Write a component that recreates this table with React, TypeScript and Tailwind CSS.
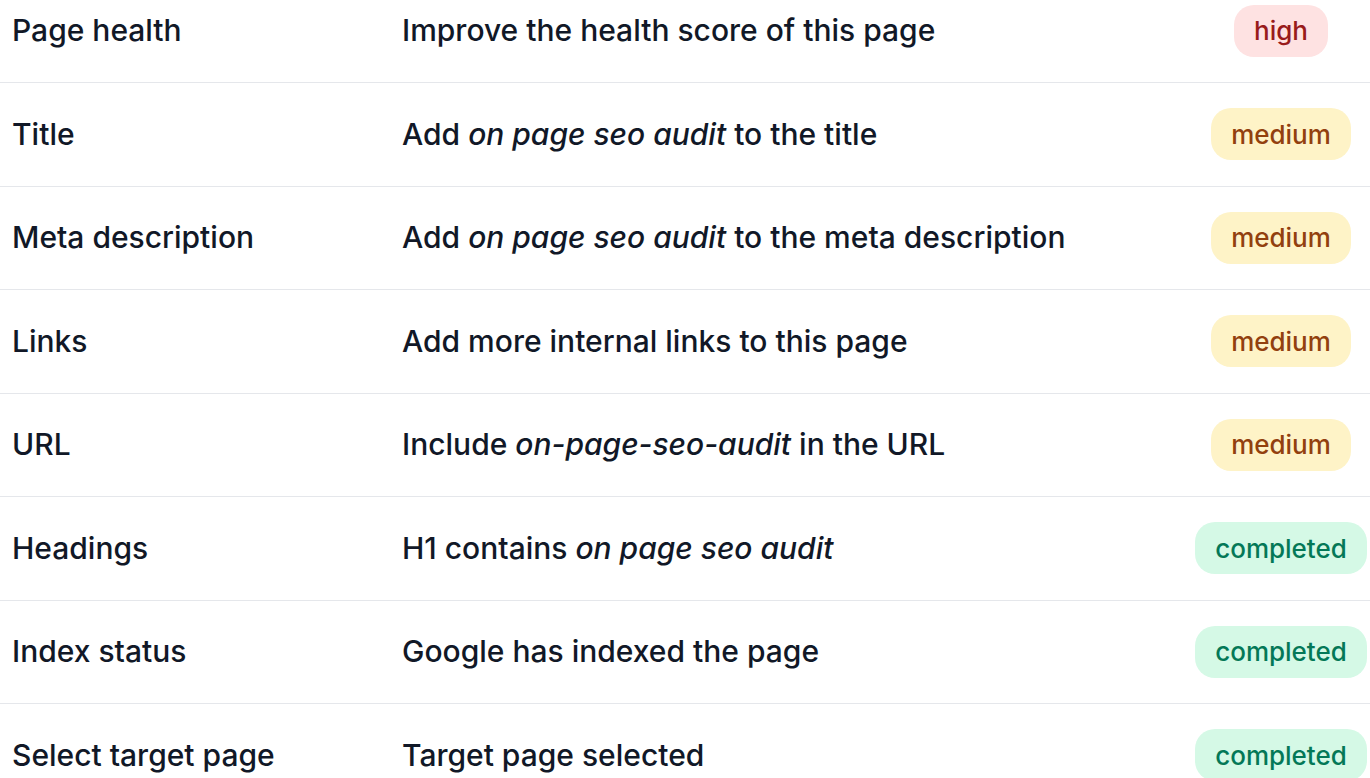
const rows = [
  { label: 'Page health', pre: 'Improve the health score of this page', kw: '', post: '', status: 'high' },
  { label: 'Title', pre: 'Add ', kw: 'on page seo audit', post: ' to the title', status: 'medium' },
  { label: 'Meta description', pre: 'Add ', kw: 'on page seo audit', post: ' to the meta description', status: 'medium' },
  { label: 'Links', pre: 'Add more internal links to this page', kw: '', post: '', status: 'medium' },
  { label: 'URL', pre: 'Include ', kw: 'on-page-seo-audit', post: ' in the URL', status: 'medium' },
  { label: 'Headings', pre: 'H1 contains ', kw: 'on page seo audit', post: '', status: 'completed' },
  { label: 'Index status', pre: 'Google has indexed the page', kw: '', post: '', status: 'completed' },
  { label: 'Select target page', pre: 'Target page selected', kw: '', post: '', status: 'completed' },
];

const badgeStyles: Record<string, string> = {
  high: 'bg-[#fee2e2] text-[#991b1b]',
  medium: 'bg-[#fef3c7] text-[#92400e]',
  completed: 'bg-[#d5f9e6] text-[#047857]',
};

const StatusBadge = ({ status }: { status: string }) => (
  <span className={`inline-flex h-[52px] items-center rounded-[20px] px-[20px] text-[26px] font-medium ${badgeStyles[status]}`}>
    {status}
  </span>
);

export default function App() {
  return (
    <div className="h-[778px] overflow-hidden bg-white font-['Inter',sans-serif] text-[#111827]">
      <div className="mt-[-20.5px]">
        {rows.map((row) => (
          <div
            key={row.label}
            className="grid h-[103.5px] grid-cols-[390px_1fr_178px] items-center border-b border-[#e5e7eb] pl-3 text-[30px] font-medium"
          >
            <div>{row.label}</div>
            <div>
              {row.pre}
              {row.kw && <em>{row.kw}</em>}
              {row.post}
            </div>
            <div className="flex justify-center">
              <StatusBadge status={row.status} />
            </div>
          </div>
        ))}
      </div>
    </div>
  );
}
